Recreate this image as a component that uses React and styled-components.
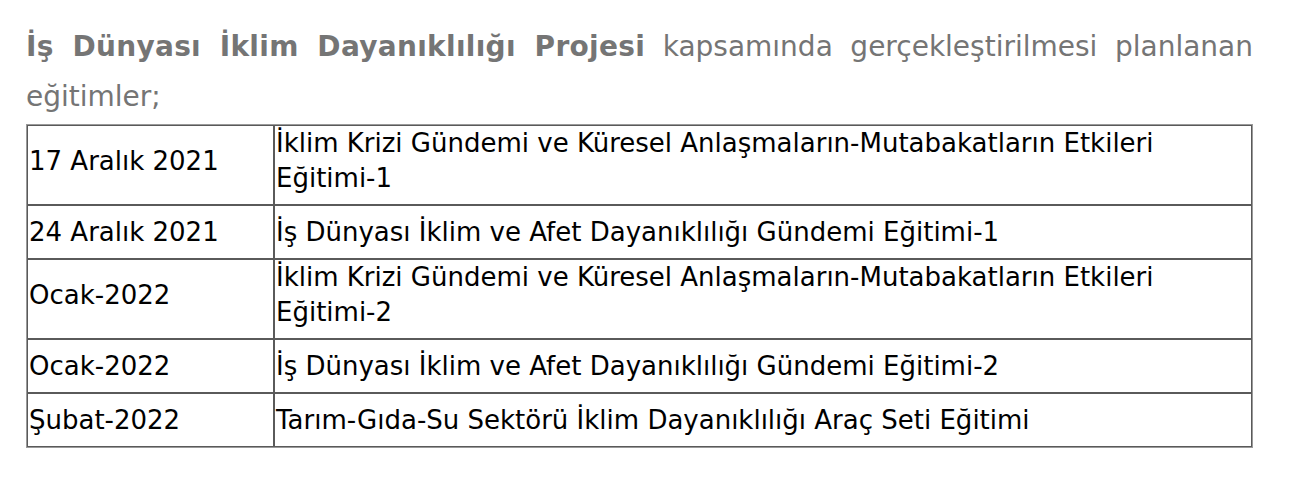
import React from 'react';
import styled, { createGlobalStyle } from 'styled-components';

const GlobalStyle = createGlobalStyle`
    body {
        margin: 0;
        background: #fff;
    }
`

const Page = styled.div`
    width: 1227px;
    padding: 22px 0 0 26px;
`

const Intro = styled.p`
    margin: 0 0 2px;
    font-family: "DejaVu Sans", Verdana, sans-serif;
    font-size: 28px;
    line-height: 50px;
    color: #757575;
    text-align: justify;

    strong {
        font-weight: bold;
        letter-spacing: 0.3px;
    }
`

const Table = styled.table`
    width: 1227px;
    border-collapse: separate;
    border-spacing: 0;
    border: 1px solid #9a9a9a;
    font-family: "DejaVu Sans", Verdana, sans-serif;
    font-size: 26px;
    color: #000;
`

const Cell = styled.td`
    border: 1px solid #5a5a5a;
    padding: ${p => (p.$double ? '0 1px 8px' : '0 1px')};
    height: ${p => (p.$double ? '70px' : '52px')};
    line-height: 35px;
    vertical-align: ${p => (p.$top ? 'top' : 'middle')};
    width: ${p => p.$width || 'auto'};
    white-space: nowrap;
`

const rows = [
    { date: '17 Aralık 2021', lines: ['İklim Krizi Gündemi ve Küresel Anlaşmaların-Mutabakatların Etkileri', 'Eğitimi-1'] },
    { date: '24 Aralık 2021', lines: ['İş Dünyası İklim ve Afet Dayanıklılığı Gündemi Eğitimi-1'] },
    { date: 'Ocak-2022', lines: ['İklim Krizi Gündemi ve Küresel Anlaşmaların-Mutabakatların Etkileri', 'Eğitimi-2'] },
    { date: 'Ocak-2022', lines: ['İş Dünyası İklim ve Afet Dayanıklılığı Gündemi Eğitimi-2'] },
    { date: 'Şubat-2022', lines: ['Tarım-Gıda-Su Sektörü İklim Dayanıklılığı Araç Seti Eğitimi'] },
]

const App = () => {
    return (
        <Page>
            <GlobalStyle />
            <Intro>
                <strong>İş Dünyası İklim Dayanıklılığı Projesi</strong> kapsamında gerçekleştirilmesi planlanan eğitimler;
            </Intro>
            <Table>
                <tbody>
                    {rows.map((row, i) => {
                        const double = row.lines.length > 1
                        return (
                            <tr key={i}>
                                <Cell $double={double} $width="243px">{row.date}</Cell>
                                <Cell $double={double} $top={double}>
                                    {row.lines.map((line, j) => (
                                        <React.Fragment key={j}>
                                            {j > 0 && <br />}
                                            {line}
                                        </React.Fragment>
                                    ))}
                                </Cell>
                            </tr>
                        )
                    })}
                </tbody>
            </Table>
        </Page>
    )
}

export default App
